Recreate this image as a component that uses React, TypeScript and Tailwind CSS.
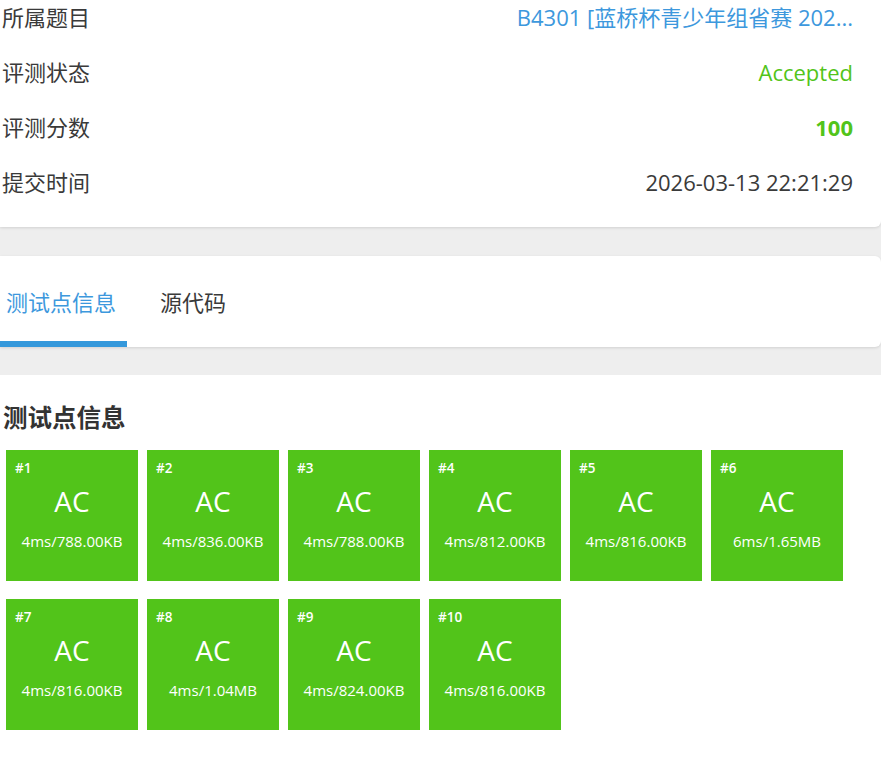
const font = { fontFamily: '"Open Sans", "Noto Sans CJK SC", sans-serif' };

interface InfoRowProps {
  label: string;
  children: React.ReactNode;
}

function InfoRow({ label, children }: InfoRowProps) {
  return (
    <div className="flex h-[55px] items-center justify-between">
      <span className="text-[22px] text-[#3a3a3a]">{label}</span>
      {children}
    </div>
  );
}

const cases = [
  "4ms/788.00KB",
  "4ms/836.00KB",
  "4ms/788.00KB",
  "4ms/812.00KB",
  "4ms/816.00KB",
  "6ms/1.65MB",
  "4ms/816.00KB",
  "4ms/1.04MB",
  "4ms/824.00KB",
  "4ms/816.00KB",
];

export default function App() {
  return (
    <div className="min-h-[763px] w-[881px] overflow-hidden bg-[#eeeeee]" style={font}>
      {/* submission info */}
      <div className="rounded-br-md bg-white pb-[17px] pl-[2px] pr-[28px] shadow-[0_1px_3px_rgba(0,0,0,0.12)]">
        <div className="-mt-[10px]">
          <InfoRow label="所属题目">
            <span className="whitespace-nowrap text-[22px] text-[#3d98dd]">B4301 [蓝桥杯青少年组省赛 202...</span>
          </InfoRow>
          <InfoRow label="评测状态">
            <span className="text-[22px] text-[#52c41a]">Accepted</span>
          </InfoRow>
          <InfoRow label="评测分数">
            <span className="text-[22px] font-bold text-[#52c41a]">100</span>
          </InfoRow>
          <InfoRow label="提交时间">
            <span className="text-[22px] text-[#3a3a3a]">2026-03-13 22:21:29</span>
          </InfoRow>
        </div>
      </div>

      {/* tabs */}
      <div className="mt-[29px] flex h-[91px] rounded-r-md bg-white shadow-[0_1px_3px_rgba(0,0,0,0.12)]">
        <div className="flex w-[127px] flex-col">
          <div className="flex flex-1 items-center pl-[6px] pt-[7px] text-[22px] text-[#3d98dd]">测试点信息</div>
          <div className="h-[6px] bg-[#3498db]" />
        </div>
        <div className="flex items-center pl-[33px] pt-[1px] text-[22px] text-[#3a3a3a]">源代码</div>
      </div>

      {/* test cases */}
      <div className="mt-[28px] min-h-[420px] bg-white px-[3px] pt-[28px]">
        <h2 className="text-[24.5px] font-bold leading-[30px] text-[#333333]">测试点信息</h2>
        <div className="mt-[17px] grid grid-cols-[repeat(6,132px)] gap-x-[9px] gap-y-[18px] pl-[3px]">
          {cases.map((stat, i) => (
            <div key={i} className="flex h-[131px] flex-col bg-[#52c41a] text-white">
              <div className="pl-[9px] pt-[8px] text-[13.5px] font-semibold leading-[20px]">#{i + 1}</div>
              <div className="mt-[5px] text-center text-[28px] leading-[36px]">AC</div>
              <div className="mt-[12px] text-center text-[15px] font-medium leading-[20px]">{stat}</div>
            </div>
          ))}
        </div>
      </div>
    </div>
  );
}
